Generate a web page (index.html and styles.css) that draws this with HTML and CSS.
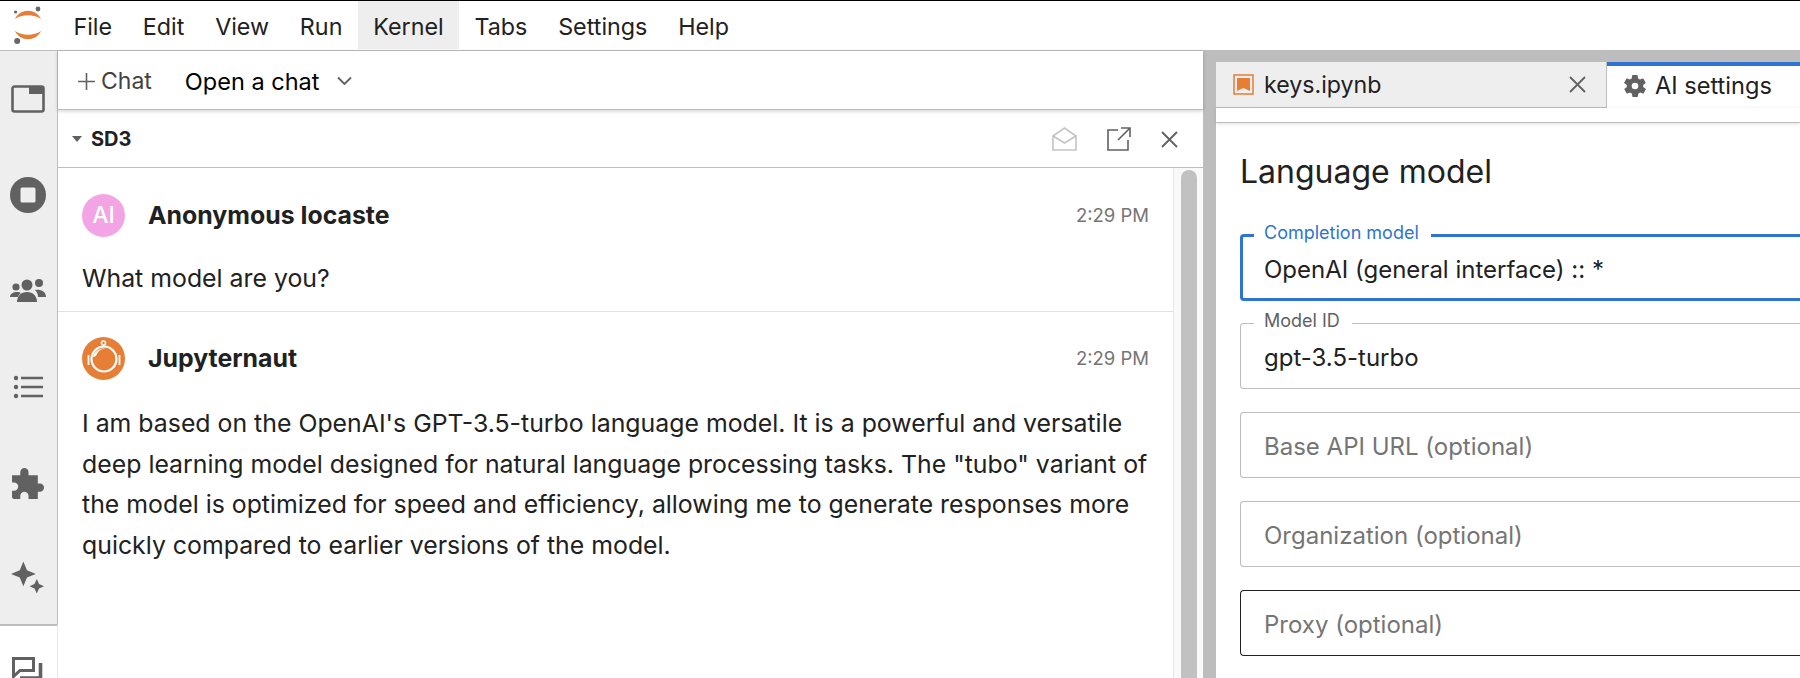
FILE: index.html
```html
<!DOCTYPE html>
<html lang="en">
<head>
    <meta charset="UTF-8">
    <title>JupyterLab</title>
    <link rel="stylesheet" href="styles.css">
</head>
<body>
    <header class="menubar">
        <div class="logo">
            <svg width="30" height="42" viewBox="0 0 30 42">
                <path d="M1 14 C6 3 22 3 27 14 C20 9 8 9 1 14Z" fill="#e67e36"/>
                <path d="M1 26 C6 37 22 37 27 26 C20 31 8 31 1 26Z" fill="#e67e36"/>
                <circle cx="24" cy="4" r="2.400" fill="#666"/>
                <circle cx="1.600" cy="7" r="1.600" fill="#666"/>
                <circle cx="3.200" cy="36" r="3" fill="#666"/>
            </svg>
        </div>
        <nav class="menu">
            <span class="menu-item">File</span>
            <span class="menu-item">Edit</span>
            <span class="menu-item">View</span>
            <span class="menu-item">Run</span>
            <span class="menu-item active">Kernel</span>
            <span class="menu-item">Tabs</span>
            <span class="menu-item">Settings</span>
            <span class="menu-item">Help</span>
        </nav>
    </header>

    <div class="main">
        <aside class="sidebar">
            <div class="side-btn">
                <svg width="34" height="28" viewBox="0 0 34 28"><path d="M1.500 3.500a2 2 0 0 1 2-2h27a2 2 0 0 1 2 2v21a2 2 0 0 1-2 2h-27a2 2 0 0 1-2-2z" fill="none" stroke="#616161" stroke-width="2.600"/><path d="M18 1h13a2 2 0 0 1 2 2v6H18z" fill="#616161"/></svg>
            </div>
            <div class="side-btn">
                <svg width="36" height="36" viewBox="0 0 36 36"><circle cx="18" cy="18" r="18" fill="#616161"/><rect x="10.500" y="10.500" width="15" height="15" rx="1.500" fill="#eee"/></svg>
            </div>
            <div class="side-btn">
                <svg width="36" height="26" viewBox="0 0 36 26"><circle cx="6" cy="9" r="3.600" fill="#616161"/><circle cx="29" cy="5" r="4" fill="#616161"/><circle cx="17" cy="7" r="5.500" fill="#616161"/><path d="M0 19c0-3 3-5 7-5 2 0 3 .5 4 1-2 1.500-3 3-3 4z" fill="#616161"/><path d="M25 12c5-1 11 1 11 7h-8c0-3-1-5-3-7z" fill="#616161"/><path d="M7 24c0-6 4-10 10-10s10 4 10 10z" fill="#616161"/></svg>
            </div>
            <div class="side-btn">
                <svg width="30" height="24" viewBox="0 0 30 24"><circle cx="3" cy="3" r="2.200" fill="#616161"/><circle cx="3" cy="12" r="2.200" fill="#616161"/><circle cx="3" cy="21" r="2.200" fill="#616161"/><path d="M8 3h22M8 12h22M8 21h22" stroke="#616161" stroke-width="2.600"/></svg>
            </div>
            <div class="side-btn">
                <svg width="33" height="31" viewBox="0 2 32 30"><path d="M1 9h8V6a4 4 0 0 1 8 0v3h9v8h2a4 4 0 0 1 0 8h-2v7H17v-3a4 4 0 0 0-8 0v3H3a2 2 0 0 1-2-2v-6h2a4 4 0 0 0 0-8H1z" fill="#616161"/></svg>
            </div>
            <div class="side-btn last">
                <svg width="33" height="34" viewBox="0 0 32 32"><path d="M12 0l3.500 8.500 8.500 3.500-8.500 3.500-3.500 8.500-3.500-8.500-8.500-3.500 8.500-3.500z" fill="#616161"/><path d="M25 17l2.200 4.800 4.800 2.200-4.800 2.200-2.200 4.800-2.200-4.800-4.800-2.200 4.800-2.200z" fill="#616161"/></svg>
            </div>
            <div class="side-btn current">
                <svg width="31" height="22" viewBox="0 0 31 22"><path d="M1.500 1.500h20v12H8l-6.500 6z" fill="none" stroke="#616161" stroke-width="3"/><path d="M28.500 6v15H8" fill="none" stroke="#616161" stroke-width="3.600"/></svg>
            </div>
        </aside>

        <section class="chat-panel">
            <div class="toolbar">
                <span class="add-chat">
                    <svg width="17" height="17" viewBox="0 0 17 17"><path d="M8.500 0v17M0 8.500h17" stroke="#616161" stroke-width="1.600"/></svg>
                    Chat
                </span>
                <span class="open-chat">Open a chat</span>
                <svg width="15" height="10" viewBox="0 0 15 10"><path d="M1 1.500L7.500 8 14 1.500" fill="none" stroke="#616161" stroke-width="1.800"/></svg>
            </div>
            <div class="chat-head">
                <svg class="caret" width="10" height="6" viewBox="0 0 10 6"><path d="M0 0h10L5 6z" fill="#616161"/></svg>
                <span class="chat-title">SD3</span>
                <span class="head-icons">
                    <svg width="25" height="24" viewBox="0 0 25 24"><path d="M1 9L12.500 1 24 9v14H1zM1 9l11.500 7L24 9" fill="none" stroke="#c4c4c4" stroke-width="1.600"/></svg>
                    <svg width="24" height="24" viewBox="0 0 24 24"><path d="M11 3H1v20h20V13M14 1h9v9M23 1L11 13" fill="none" stroke="#616161" stroke-width="1.600"/></svg>
                    <svg width="17" height="17" viewBox="0 0 17 17"><path d="M1 1l15 15M16 1L1 16" stroke="#616161" stroke-width="1.800"/></svg>
                </span>
            </div>
            <div class="chat-body">
                <div class="messages">
                    <article class="message first">
                        <div class="msg-head">
                            <span class="avatar pink">AI</span>
                            <span class="msg-author">Anonymous Iocaste</span>
                            <span class="msg-time">2:29 PM</span>
                        </div>
                        <p class="msg-text">What model are you?</p>
                    </article>
                    <article class="message">
                        <div class="msg-head">
                            <span class="avatar orange">
                                <svg width="43" height="43" viewBox="0 0 43 43">
                                    <circle cx="21.500" cy="6" r="2" fill="none" stroke="#fff" stroke-width="1.500"/>
                                    <circle cx="22" cy="22" r="12.500" fill="none" stroke="#fff" stroke-width="2.200"/>
                                    <path d="M11 20c1-5 6-9 13-9-5 1-8 3-9 6-1 2-2 3-4 3z" fill="#fff"/>
                                    <path d="M6.500 18v10M37.500 18v10" stroke="#fff" stroke-width="1.800"/>
                                </svg>
                            </span>
                            <span class="msg-author">Jupyternaut</span>
                            <span class="msg-time">2:29 PM</span>
                        </div>
                        <p class="msg-text long">I am based on the OpenAI's GPT-3.5-turbo language model. It is a powerful and versatile deep learning model designed for natural language processing tasks. The "tubo" variant of the model is optimized for speed and efficiency, allowing me to generate responses more quickly compared to earlier versions of the model.</p>
                    </article>
                </div>
                <div class="scrollbar"><div class="thumb"></div></div>
            </div>
        </section>

        <div class="divider"></div>

        <section class="settings-panel">
            <div class="tabbar">
                <div class="tab">
                    <svg width="21" height="21" viewBox="0 0 21 21"><rect x="1" y="1" width="19" height="19" fill="none" stroke="#e67e36" stroke-width="1.500"/><path d="M4 4h13v13l-6.500-3L4 17z" fill="#e67e36"/></svg>
                    <span class="tab-label">keys.ipynb</span>
                    <svg class="tab-close" width="17" height="17" viewBox="0 0 17 17"><path d="M1 1l15 15M16 1L1 16" stroke="#616161" stroke-width="1.800"/></svg>
                </div>
                <div class="tab current">
                    <svg width="22" height="22" viewBox="2 2 20 20"><path fill="#616161" d="M19.400 13a7.500 7.500 0 0 0 0-2l2.100-1.600a.5.5 0 0 0 .1-.6l-2-3.500a.5.5 0 0 0-.6-.2l-2.500 1a7.300 7.300 0 0 0-1.700-1l-.4-2.700a.5.5 0 0 0-.5-.4h-4a.5.5 0 0 0-.5.400l-.4 2.700a7.300 7.300 0 0 0-1.700 1l-2.500-1a.5.5 0 0 0-.6.200l-2 3.500a.5.5 0 0 0 .1.600L4.600 11a7.500 7.500 0 0 0 0 2l-2.100 1.600a.5.5 0 0 0-.1.600l2 3.500a.5.5 0 0 0 .6.200l2.500-1c.5.400 1.100.8 1.700 1l.4 2.700a.5.5 0 0 0 .5.400h4a.5.5 0 0 0 .5-.4l.4-2.700c.6-.2 1.200-.6 1.700-1l2.500 1a.5.5 0 0 0 .6-.2l2-3.500a.5.5 0 0 0-.1-.6zM12 15a3 3 0 1 1 0-6 3 3 0 0 1 0 6z"/></svg>
                    <span class="tab-label">AI settings</span>
                </div>
            </div>
            <div class="tab-toolbar"></div>
            <div class="settings-body">
                <h2 class="settings-title">Language model</h2>
                <div class="field focused">
                    <span class="field-label">Completion model</span>
                    <span class="field-value">OpenAI (general interface) :: *</span>
                </div>
                <div class="field">
                    <span class="field-label">Model ID</span>
                    <span class="field-value">gpt-3.5-turbo</span>
                </div>
                <div class="field">
                    <span class="field-value empty">Base API URL (optional)</span>
                </div>
                <div class="field">
                    <span class="field-value empty">Organization (optional)</span>
                </div>
                <div class="field hovered">
                    <span class="field-value empty">Proxy (optional)</span>
                </div>
            </div>
        </section>
    </div>
</body>
</html>
```

FILE: styles.css
```css
html, body {
    margin: 0;
    height: 100%;
    overflow: hidden;
}

body {
    font-family: Inter, "Liberation Sans", sans-serif;
    color: #212121;
    background: #fff;
    display: flex;
    flex-direction: column;
    border-top: 1px solid #000;
    box-sizing: border-box;
}

/* top menu */
.menubar {
    display: flex;
    height: 50px;
    flex: none;
    border-bottom: 1px solid #bdbdbd;
    box-sizing: border-box;
}

.logo {
    width: 58px;
    display: flex;
    align-items: center;
    justify-content: center;
}

.logo svg {
    overflow: visible;
}

.menu {
    display: flex;
    height: 48px;
}

.menu-item {
    padding: 0 15.400px;
    font-size: 23.300px;
    height: 48px;
    line-height: 52px;
}

.menu-item.active {
    background: #eee;
}

/* main area */
.main {
    flex: 1;
    display: flex;
    min-height: 0;
}

.sidebar {
    width: 57px;
    flex: none;
    display: flex;
    flex-direction: column;
    background: #eee;
    border-right: 1px solid #bdbdbd;
}

.side-btn {
    height: 96px;
    flex: none;
    display: flex;
    align-items: center;
    justify-content: center;
    padding-right: 2px;
    box-sizing: border-box;
}

.side-btn.last {
    height: 93px;
}

.side-btn.current {
    flex: 1;
    align-items: flex-start;
    padding: 31px 3px 0 0;
    background: #fff;
    margin-right: -1px;
    border-top: 2px solid #bdbdbd;
    border-right: 1px solid #e6e6e6;
}

.chat-panel {
    width: 1145px;
    flex: none;
    display: flex;
    flex-direction: column;
}

.toolbar {
    height: 59px;
    flex: none;
    display: flex;
    align-items: center;
    padding: 2px 0 0 20px;
    box-sizing: border-box;
    border-bottom: 1px solid #bdbdbd;
    box-shadow: 0 1px 4px rgba(0, 0, 0, 0.2);
    position: relative;
}

.add-chat {
    display: flex;
    align-items: center;
    gap: 6px;
    font-size: 23px;
    color: #424242;
}

.open-chat {
    margin: 0 18px 0 33px;
    font-size: 23.500px;
    color: #000;
}

.chat-head {
    height: 58px;
    flex: none;
    display: flex;
    align-items: center;
    padding: 1px 0 0 14px;
    box-sizing: border-box;
    border-bottom: 1px solid #bdbdbd;
}

.chat-title {
    font-weight: 700;
    font-size: 20px;
    margin-left: 9px;
}

.head-icons {
    margin-left: auto;
    display: flex;
    align-items: center;
    gap: 30px;
    padding-right: 25px;
}

.chat-body {
    flex: 1;
    display: flex;
    min-height: 0;
}

.messages {
    flex: 1;
    min-width: 0;
}

.message {
    padding: 0 24px;
}

.message.first {
    border-bottom: 1px solid #e0e0e0;
}

.msg-head {
    display: flex;
    align-items: center;
    height: 44px;
    padding-top: 24px;
}

.first .msg-head {
    padding-top: 25px;
}

.avatar {
    width: 43px;
    height: 43px;
    border-radius: 50%;
    display: flex;
    align-items: center;
    justify-content: center;
    color: #fff;
    font-size: 23px;
    font-weight: 500;
    flex: none;
}

.avatar.pink {
    background: #f2a4e4;
}

.avatar.orange {
    background: #e67e36;
}

.msg-author {
    font-weight: 700;
    font-size: 24.850px;
    margin-left: 23px;
}

.msg-time {
    margin-left: auto;
    font-size: 18.500px;
    color: #757575;
}

.msg-text {
    margin: 0;
    font-size: 24.850px;
    line-height: 41px;
    padding: 21px 0 12px;
}

.msg-text.long {
    line-height: 40.600px;
    padding-top: 23px;
}

.scrollbar {
    width: 29px;
    flex: none;
    margin-right: 1px;
    border-left: 1px solid #e6e6e6;
    background: #f9f9f9;
    box-sizing: border-box;
    padding: 2px 5px 0 7px;
}

.thumb {
    height: 100%;
    background: #c1c1c1;
    border-radius: 8px 8px 0 0;
}

.divider {
    width: 13px;
    flex: none;
    background: #bdbdbd;
}

.settings-panel {
    flex: 1;
    min-width: 0;
    display: flex;
    flex-direction: column;
    border-top: 11px solid #bdbdbd;
}

.tabbar {
    display: flex;
    height: 46px;
    flex: none;
}

.tab {
    width: 391px;
    display: flex;
    align-items: center;
    background: #eee;
    border: solid #bdbdbd;
    border-width: 0 1px 1px 0;
    padding-left: 17px;
    box-sizing: border-box;
    gap: 10px;
}

.tab-label {
    font-size: 23.200px;
}

.tab-close {
    margin-left: auto;
    margin-right: 20px;
}

.tab.current {
    flex: 1;
    background: #fff;
    border: 0;
    border-top: 4px solid #2f74d0;
    padding-bottom: 3px;
    gap: 9px;
}

.tab.current .tab-label {
    font-size: 23.600px;
}

.tab-toolbar {
    height: 15px;
    flex: none;
    box-sizing: border-box;
    border-bottom: 1px solid #bdbdbd;
    box-shadow: 0 1px 4px rgba(0, 0, 0, 0.12);
}

.settings-body {
    padding: 0 0 0 24px;
}

.settings-title {
    margin: 27px 0 40px;
    font-size: 32px;
    font-weight: 400;
    line-height: 44px;
}

.field {
    position: relative;
    height: 66px;
    box-sizing: border-box;
    border: 1px solid #bdbdbd;
    border-right: 0;
    border-radius: 4px 0 0 4px;
    margin-bottom: 23px;
    padding: 3px 0 0 23px;
    display: flex;
    align-items: center;
    font-size: 24px;
}

.field.focused {
    height: 67px;
    border: 3px solid #2f74d0;
    border-right: 0;
    margin-bottom: 22px;
    padding: 3px 0 0 21px;
}

.field.hovered {
    border-color: #212121;
}

/* notched label on top of the border */
.field-label {
    position: absolute;
    left: 13px;
    top: -13px;
    background: #fff;
    padding: 0 12px 0 10px;
    font-size: 18px;
    line-height: 20px;
    color: #616161;
}

.focused .field-label {
    color: #2f74d0;
    left: 11px;
    top: -14px;
}

.field-value.empty {
    color: #757575;
}
```
